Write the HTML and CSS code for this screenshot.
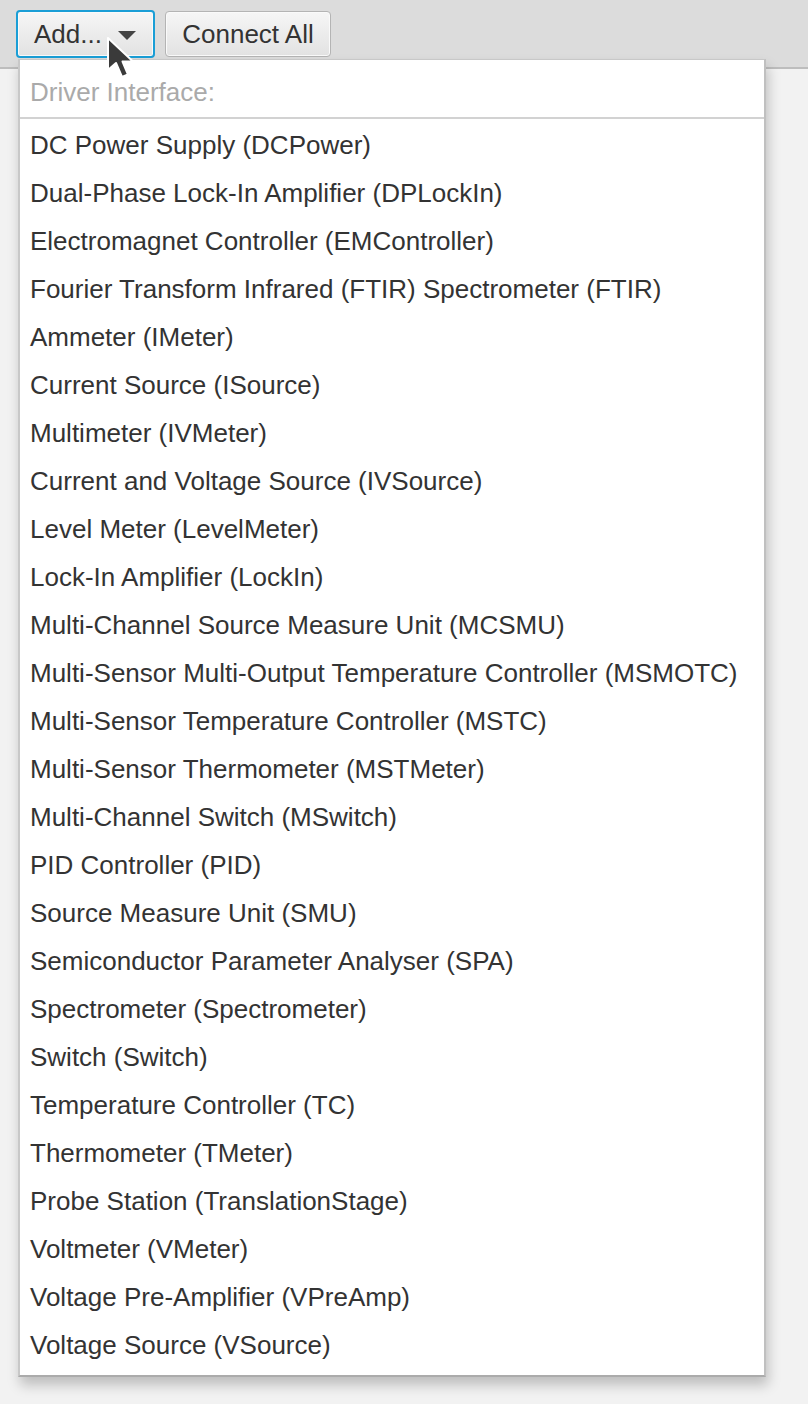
FILE: index.html
```html
<!DOCTYPE html>
<html>
<head>
<meta charset="utf-8">
<link rel="stylesheet" href="styles.css">
</head>
<body>
<div class="toolbar">
  <button class="btn btn-focus">Add... <span class="caret"></span></button>
  <button class="btn">Connect All</button>
</div>
<div class="content"></div>
<div class="popup">
  <div class="popup-header">Driver Interface:</div>
  <ul class="items">
    <li>DC Power Supply (DCPower)</li>
    <li>Dual-Phase Lock-In Amplifier (DPLockIn)</li>
    <li>Electromagnet Controller (EMController)</li>
    <li>Fourier Transform Infrared (FTIR) Spectrometer (FTIR)</li>
    <li>Ammeter (IMeter)</li>
    <li>Current Source (ISource)</li>
    <li>Multimeter (IVMeter)</li>
    <li>Current and Voltage Source (IVSource)</li>
    <li>Level Meter (LevelMeter)</li>
    <li>Lock-In Amplifier (LockIn)</li>
    <li>Multi-Channel Source Measure Unit (MCSMU)</li>
    <li>Multi-Sensor Multi-Output Temperature Controller (MSMOTC)</li>
    <li>Multi-Sensor Temperature Controller (MSTC)</li>
    <li>Multi-Sensor Thermometer (MSTMeter)</li>
    <li>Multi-Channel Switch (MSwitch)</li>
    <li>PID Controller (PID)</li>
    <li>Source Measure Unit (SMU)</li>
    <li>Semiconductor Parameter Analyser (SPA)</li>
    <li>Spectrometer (Spectrometer)</li>
    <li>Switch (Switch)</li>
    <li>Temperature Controller (TC)</li>
    <li>Thermometer (TMeter)</li>
    <li>Probe Station (TranslationStage)</li>
    <li>Voltmeter (VMeter)</li>
    <li>Voltage Pre-Amplifier (VPreAmp)</li>
    <li>Voltage Source (VSource)</li>
  </ul>
</div>
<svg class="cursor" width="34" height="46" viewBox="0 0 34 46">
  <path d="M2 2 L2 34 L10 27 L16 41 L22 38.5 L16.5 25.5 L27 25.5 Z" fill="#3a3a3a" stroke="#ffffff" stroke-width="2" stroke-linejoin="round"/>
</svg>
</body>
</html>
```
FILE: styles.css
```css
html, body {
  margin: 0;
  padding: 0;
}
body {
  background: #f2f2f2;
  font-family: "Liberation Sans", Arial, sans-serif;
  width: 808px;
  height: 1404px;
  overflow: hidden;
  position: relative;
}
.toolbar {
  background: #dcdcdc;
  border-bottom: 2px solid #bdbdbd;
  display: flex;
  align-items: flex-start;
  gap: 10px;
  padding: 10px 0 0 16px;
  box-sizing: border-box;
  height: 69px;
}
.btn {
  font-family: "Liberation Sans", Arial, sans-serif;
  font-size: 26px;
  color: #333;
  height: 47px;
  padding: 0 15px;
  border: 1px solid #b4b4b4;
  border-radius: 4px;
  background: linear-gradient(#f6f6f6, #e2e2e2);
  box-shadow: inset 0 0 0 1px #fafafa;
  display: flex;
  align-items: center;
  margin: 0;
}
.btn-focus {
  border: 2px solid #1a9ed6;
  padding: 0 0 0 16px;
  width: 139px;
  height: 48px;
}
.caret {
  display: inline-block;
  width: 0;
  height: 0;
  border-left: 9px solid transparent;
  border-right: 9px solid transparent;
  border-top: 9px solid #444;
  margin-left: 16px;
  margin-top: 2px;
}
.btn + .btn {
  margin-top: 1px;
  width: 166px;
  height: 46px;
  justify-content: center;
}
.content {
  height: 1335px;
}
.popup {
  position: absolute;
  left: 18px;
  top: 59px;
  width: 748px;
  height: 1318px;
  box-sizing: border-box;
  background: #fff;
  border: 2px solid #c8c8c8;
  border-top-width: 1px;
  border-bottom-color: #ababab;
  border-right-color: #c0c0c0;
  box-shadow: 2px 8px 12px rgba(0, 0, 0, 0.22);
}
.popup-header {
  height: 59px;
  box-sizing: border-box;
  border-bottom: 2px solid #d2d2d2;
  color: #aaaaaa;
  font-size: 26px;
  line-height: 26px;
  padding: 19px 0 0 10px;
}
.items {
  list-style: none;
  margin: 0;
  padding: 2px 0 0 0;
}
.items li {
  height: 48px;
  line-height: 48px;
  font-size: 26px;
  color: #333;
  padding-left: 10px;
  white-space: nowrap;
}
.cursor {
  position: absolute;
  left: 106px;
  top: 36px;
}
```
